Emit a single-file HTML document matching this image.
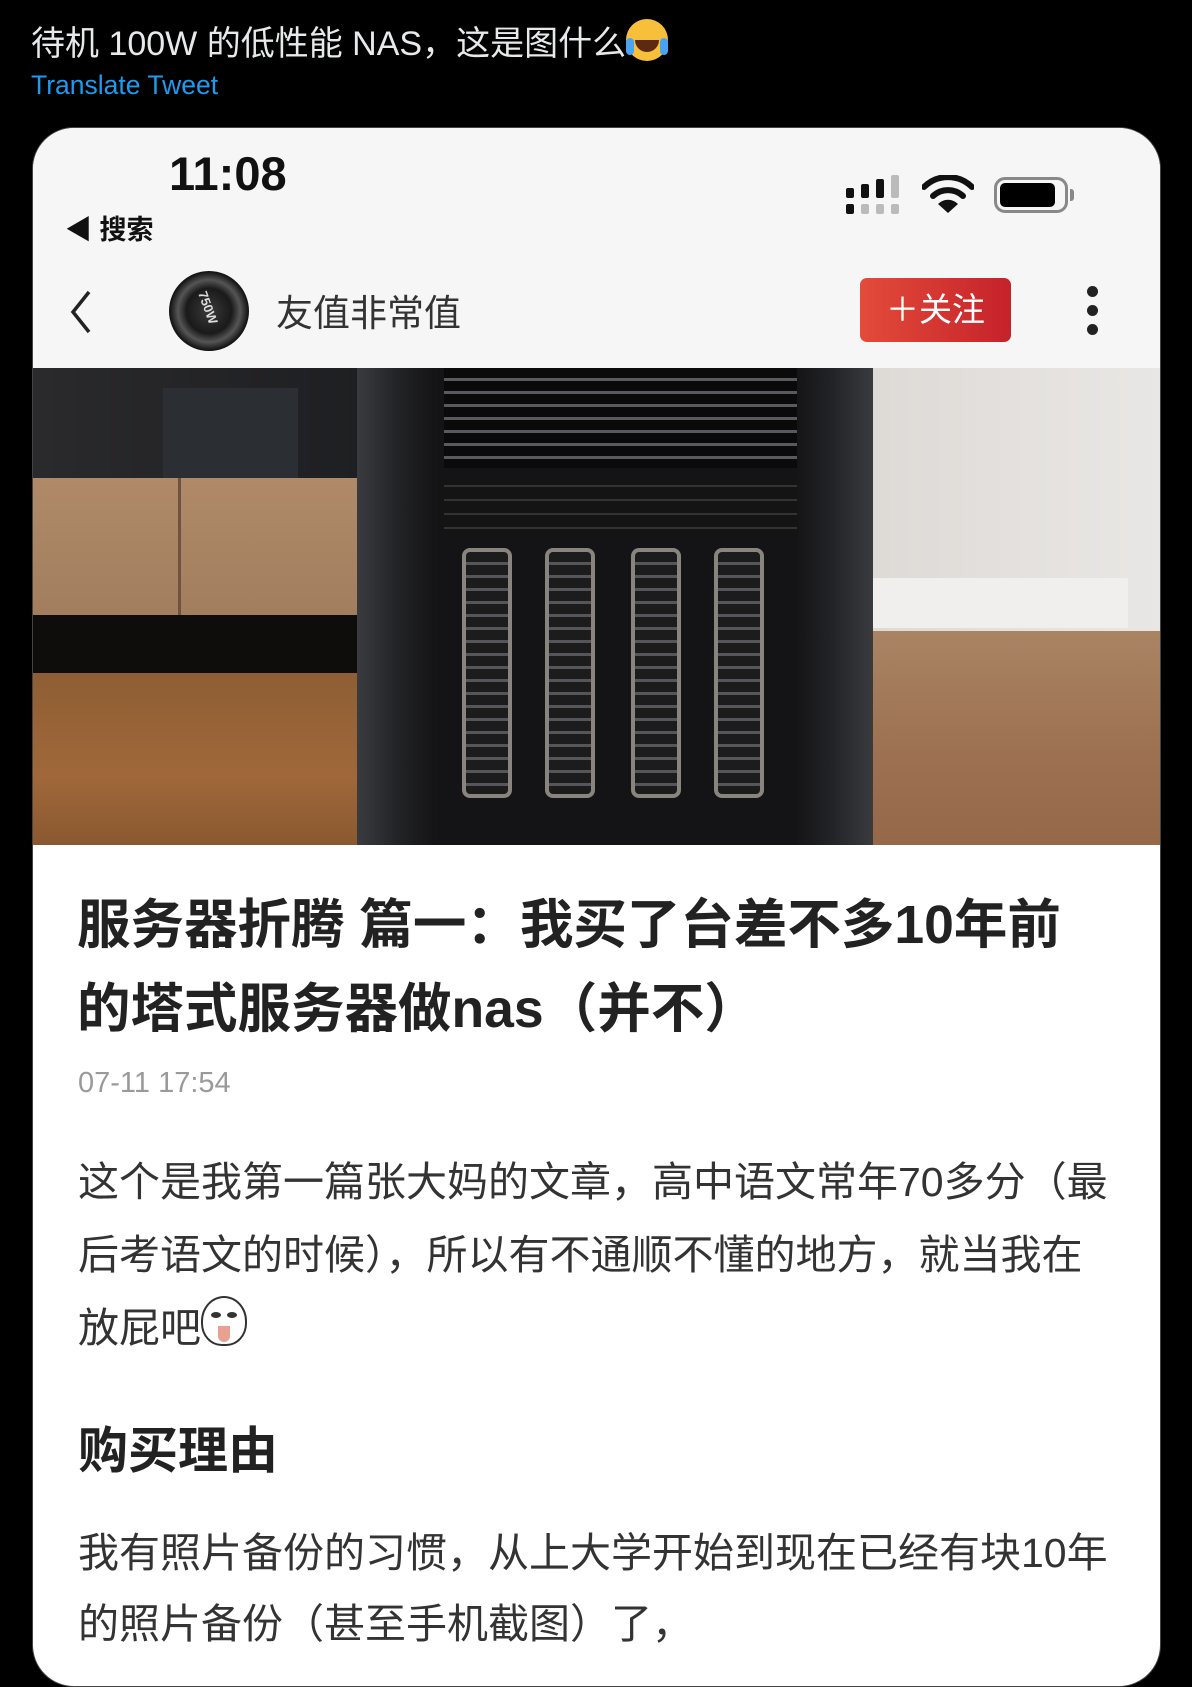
<!DOCTYPE html>
<html><head><meta charset="utf-8">
<style>
*{margin:0;padding:0;box-sizing:border-box}
body{width:1192px;height:1660px;background:#000;overflow:hidden;position:relative;font-family:"Liberation Sans","Noto Sans CJK SC",sans-serif}
.abs{position:absolute}
.tw{left:31px;top:16px;color:#e7e9ea;font-size:34px;white-space:nowrap}
.tr{left:31px;top:70px;color:#1d9bf0;font-size:26.5px}
.card{left:32px;top:127px;width:1129px;height:1560px;background:#fff;border-radius:42px;overflow:hidden;border:1px solid #444}
.hdr{left:0;top:0;width:100%;height:240px;background:#f6f6f6}
.t{font-family:"Liberation Sans","Noto Sans CJK SC",sans-serif;color:#222}
.bay{position:absolute;top:180px;width:50px;height:250px;border-radius:8px;background:repeating-linear-gradient(180deg,#1c1c1c 0,#1c1c1c 10px,#55555a 10px,#55555a 13px);border:4px solid #8a847e}
</style></head><body>
<div class="abs tw">待机 100W 的低性能 NAS，这是图什么<span style="display:inline-block;width:42px;height:42px;border-radius:50%;background:#f8c03a;vertical-align:-6px;position:relative"><span style="position:absolute;left:9px;top:21px;width:24px;height:12px;background:#5a2a12;border-radius:0 0 12px 12px"></span><span style="position:absolute;left:0;top:19px;width:8px;height:17px;background:#4aa3f0;border-radius:4px"></span><span style="position:absolute;right:0;top:19px;width:8px;height:17px;background:#4aa3f0;border-radius:4px"></span></span></div>
<div class="abs tr">Translate Tweet</div>

<div class="abs card">
 <div class="abs hdr"></div>
 <div class="abs t" style="left:136px;top:18px;font-size:47px;font-weight:bold;color:#111">11:08</div>
 <div class="abs t" style="left:32px;top:80px;font-size:27px;font-weight:bold;color:#111">◀ 搜索</div>
 <svg class="abs" style="left:812px;top:47px" width="60" height="40">
  <rect x="1" y="13" width="8" height="10" rx="2" fill="#111"/>
  <rect x="16" y="9" width="8" height="14" rx="2" fill="#111"/>
  <rect x="31" y="4" width="8" height="19" rx="2" fill="#111"/>
  <rect x="46" y="0" width="8" height="23" rx="2" fill="#bbb"/>
  <rect x="1" y="29" width="8" height="10" rx="2" fill="#111"/>
  <rect x="16" y="29" width="8" height="10" rx="2" fill="#bbb"/>
  <rect x="31" y="29" width="8" height="10" rx="2" fill="#bbb"/>
  <rect x="46" y="29" width="8" height="10" rx="2" fill="#bbb"/>
 </svg>
 <svg class="abs" style="left:889px;top:47px" width="52" height="40" viewBox="0 0 52 40">
  <path d="M2 12 A34 34 0 0 1 50 12" stroke="#111" stroke-width="6" fill="none" stroke-linecap="round"/>
  <path d="M11 21 A22 22 0 0 1 41 21" stroke="#111" stroke-width="6" fill="none" stroke-linecap="round"/>
  <path d="M26 38 L16 29 A14 14 0 0 1 36 29 Z" fill="#111"/>
 </svg>
 <div class="abs" style="left:961px;top:49px;width:74px;height:36px;border:3px solid #888;border-radius:11px"></div>
 <div class="abs" style="left:967px;top:55px;width:55px;height:24px;background:#000;border-radius:5px"></div>
 <div class="abs" style="left:1037px;top:61px;width:4px;height:12px;background:#888;border-radius:0 3px 3px 0"></div>
 <svg class="abs" style="left:34px;top:162px" width="30" height="44"><path d="M22 2 L6 22 L22 42" stroke="#222" stroke-width="3.5" fill="none"/></svg>
 <div class="abs" style="left:136px;top:143px;width:80px;height:80px;border-radius:50%;background:radial-gradient(circle at 50% 50%,#3a3a3a 0,#1a1a1a 40%,#555 55%,#111 70%,#2a2a2a 100%)"></div>
 <div class="abs" style="left:158px;top:172px;color:#ddd;font-size:13px;font-weight:bold;transform:rotate(70deg)">750W</div>
 <div class="abs t" style="left:243px;top:155px;font-size:37px;color:#333">友值非常值</div>
 <div class="abs" style="left:827px;top:150px;width:151px;height:64px;border-radius:7px;background:linear-gradient(90deg,#e34b3a,#c5222a);color:#fff;font-size:33px;text-align:center;line-height:64px">＋关注</div>
 <div class="abs" style="left:1054px;top:158px;width:11px;height:11px;border-radius:50%;background:#222"></div>
 <div class="abs" style="left:1054px;top:177px;width:11px;height:11px;border-radius:50%;background:#222"></div>
 <div class="abs" style="left:1054px;top:196px;width:11px;height:11px;border-radius:50%;background:#222"></div>

 <div class="abs" style="left:0;top:240px;width:1129px;height:477px;overflow:hidden;background:#111">
  <div class="abs" style="left:0;top:0;width:325px;height:110px;background:linear-gradient(90deg,#2a2a2c,#1e1f22)"></div>
  <div class="abs" style="left:130px;top:20px;width:135px;height:90px;background:#2b2e33"></div>
  <div class="abs" style="left:0;top:110px;width:325px;height:137px;background:linear-gradient(180deg,#b08a68,#a27e5e)"></div>
  <div class="abs" style="left:145px;top:110px;width:3px;height:137px;background:#6e5440"></div>
  <div class="abs" style="left:0;top:247px;width:325px;height:58px;background:#0e0d0c"></div>
  <div class="abs" style="left:0;top:305px;width:325px;height:172px;background:linear-gradient(180deg,#8e5e34,#a0683a 60%,#8a5830)"></div>
  <div class="abs" style="left:840px;top:0;width:289px;height:263px;background:linear-gradient(90deg,#dedad6,#e9e7e5)"></div>
  <div class="abs" style="left:840px;top:210px;width:255px;height:50px;background:#f1efed"></div>
  <div class="abs" style="left:840px;top:263px;width:289px;height:214px;background:linear-gradient(180deg,#a98463,#9c7050 60%,#946848)"></div>
  <div class="abs" style="left:324px;top:0;width:516px;height:477px;background:linear-gradient(90deg,#3a3b3f,#222326 8%,#141416 15%,#141416 85%,#222326 92%,#3a3b3f)"></div>
  <div class="abs" style="left:411px;top:0;width:353px;height:100px;background:repeating-linear-gradient(180deg,#0a0a0a 0,#0a0a0a 10px,#5a5a5e 10px,#5a5a5e 13px)"></div>
  <div class="abs" style="left:411px;top:105px;width:353px;height:60px;background:repeating-linear-gradient(180deg,#141414 0,#141414 12px,#333 12px,#333 14px)"></div>
  <div class="bay" style="left:429px"></div>
  <div class="bay" style="left:512px"></div>
  <div class="bay" style="left:598px"></div>
  <div class="bay" style="left:681px"></div>
 </div>

 <div class="abs t" style="left:44px;top:756px;width:1005px;font-size:53.5px;font-weight:bold;line-height:84px;color:#222">服务器折腾 篇一：我买了台差不多10年前的塔式服务器做nas（并不）</div>
 <div class="abs" style="left:45px;top:939px;font-size:29px;color:#9a9a9a">07-11 17:54</div>
 <div class="abs t" style="left:45px;top:1018px;width:1038px;font-size:41px;line-height:73px;color:#333">这个是我第一篇张大妈的文章，高中语文常年70多分（最后考语文的时候），所以有不通顺不懂的地方，就当我在放屁吧<span style="display:inline-block;width:46px;height:50px;border:2px solid #333;border-radius:50% 50% 45% 45%;vertical-align:-4px;background:#fff;position:relative"><span style="position:absolute;left:8px;top:14px;width:10px;height:6px;border-radius:50%;background:#333"></span><span style="position:absolute;left:24px;top:14px;width:10px;height:6px;border-radius:50%;background:#333"></span><span style="position:absolute;left:15px;top:28px;width:12px;height:16px;border-radius:0 0 6px 6px;background:#e8a090"></span></span></div>
 <div class="abs t" style="left:45px;top:1283px;font-size:50px;font-weight:bold;color:#222">购买理由</div>
 <div class="abs t" style="left:45px;top:1390px;width:1038px;font-size:41px;line-height:71px;color:#333">我有照片备份的习惯，从上大学开始到现在已经有块10年的照片备份（甚至手机截图）了，</div>
</div>
</body></html>
